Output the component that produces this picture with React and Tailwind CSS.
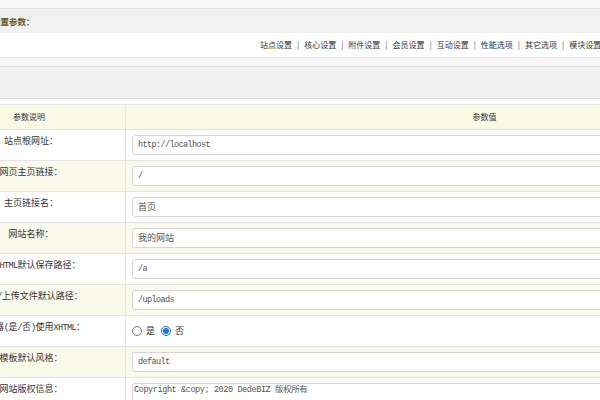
import React from "react";

const cjk = { fontFamily: '"Noto Sans CJK SC", "Noto Sans", sans-serif' };
const mono = { fontFamily: '"Liberation Mono", "Noto Sans CJK SC", monospace' };

const navItems = ["站点设置", "核心设置", "附件设置", "会员设置", "互动设置", "性能选项", "其它选项", "模块设置", "添加新变量"];

const rows = [
  { label: "站点根网址：", value: "http://localhost" },
  { label: "网页主页链接：", value: "/" },
  { label: "主页链接名：", value: "首页", cjk: true },
  { label: "网站名称：", value: "我的网站", cjk: true },
  { label: "文档HTML默认保存路径：", value: "/a" },
  { label: "图片/上传文件默认路径：", value: "/uploads" },
  { label: "编辑器(是/否)使用XHTML：", type: "radio" },
  { label: "模板默认风格：", value: "default" },
  { label: "网站版权信息：", type: "textarea", value: "Copyright &copy; 2020 DedeBIZ 版权所有" },
];

// latin runs are half width, like the bitmap font in the screenshot
const Label = ({ text }) =>
  text.split(/([\x20-\x7e]+)/).map((part, i) =>
    /^[\x20-\x7e]+$/.test(part) ? (
      <span key={i} className="text-[8.5px] tracking-[-0.6px]" style={mono}>
        {part}
      </span>
    ) : (
      <span key={i} style={cjk}>
        {part}
      </span>
    )
  );

const Radio = ({ checked }) => (
  <span
    className={
      "w-[10px] h-[10px] rounded-full border flex items-center justify-center bg-white " +
      (checked ? "border-[#1a73e8]" : "border-[#767676]")
    }
  >
    {checked && <span className="w-[6px] h-[6px] rounded-full bg-[#1a73e8]" />}
  </span>
);

const ValueCell = ({ row }) => {
  if (row.type === "radio") {
    return (
      <div className="h-full flex items-center gap-[3px] pl-[6px] text-[9px] text-[#333]" style={cjk}>
        <Radio />
        <span className="ml-[1px] mr-[3px]">是</span>
        <Radio checked />
        <span className="ml-[1px]">否</span>
      </div>
    );
  }
  if (row.type === "textarea") {
    return (
      <div className="pl-[6px] pt-[5px]">
        <div
          className="w-[620px] h-[50px] border border-[#d6d6d6] rounded-[2px] bg-white pl-[1px] text-[8.5px] leading-[12px] text-[#555] tracking-[-0.4px] whitespace-nowrap"
          style={mono}
        >
          {row.value}
        </div>
      </div>
    );
  }
  return (
    <div className="pl-[6px] pt-[5px]">
      <div
        className={
          "w-[620px] h-[20px] border border-[#d6d6d6] rounded-[3px] bg-white px-[5px] flex items-center text-[#555] whitespace-nowrap " +
          (row.cjk ? "text-[9px]" : "text-[8.5px] tracking-[-0.6px]")
        }
        style={row.cjk ? cjk : mono}
      >
        {row.value}
      </div>
    </div>
  );
};

export default function App() {
  return (
    <div className="w-[600px] h-[400px] overflow-hidden bg-white text-[#333]" style={cjk}>
      <div className="ml-[-67px] w-[910px]">
        <div className="h-[9px] bg-[#f6f6f6] border-b border-[#e2e2e2]" />
        <div className="h-[24px] bg-[#f1f1f1] flex items-center pl-[42px] text-[8.5px] font-bold text-[#665a1c]">
          系统配置参数：
        </div>
        <div className="h-[25px] bg-white border-b border-[#e4e4e4] flex items-center pl-[327px] text-[8px] whitespace-nowrap">
          {navItems.map((item, i) => (
            <React.Fragment key={item}>
              {i > 0 && <span className="mx-[5px] text-[#555]">|</span>}
              <span>{item}</span>
            </React.Fragment>
          ))}
        </div>
        <div className="h-[9px] bg-[#f7f7f7] border-b border-[#dedede]" />
        <div className="h-[32px] bg-[#f0f0f0] border-b border-[#e0e0e0]" />
        <div className="h-[5px] bg-white" />

        <div className="h-[26px] flex bg-[#fafae4] border-y border-[#e3e3e3] text-[8px]">
          <div className="w-[193px] border-r border-[#e6e6e6] flex items-center justify-center">参数说明</div>
          <div className="flex-1 flex items-center justify-center">参数值</div>
        </div>

        {rows.map((row, i) => (
          <div
            key={row.label}
            className={
              "flex border-b border-[#e3e3e3] " +
              (row.type === "textarea" ? "h-[70px] " : "h-[31px] ") +
              (i % 2 === 1 ? "bg-[#f9faec]" : "bg-white")
            }
          >
            <div className="w-[193px] shrink-0 border-r border-[#e6e6e6] pt-[5px] pl-[4px] flex justify-center">
              <div className="w-[1px] flex justify-center whitespace-nowrap text-[9px] leading-[12px]">
                <span>
                  <Label text={row.label} />
                </span>
              </div>
            </div>
            <div className="flex-1">
              <ValueCell row={row} />
            </div>
          </div>
        ))}
      </div>
    </div>
  );
}
